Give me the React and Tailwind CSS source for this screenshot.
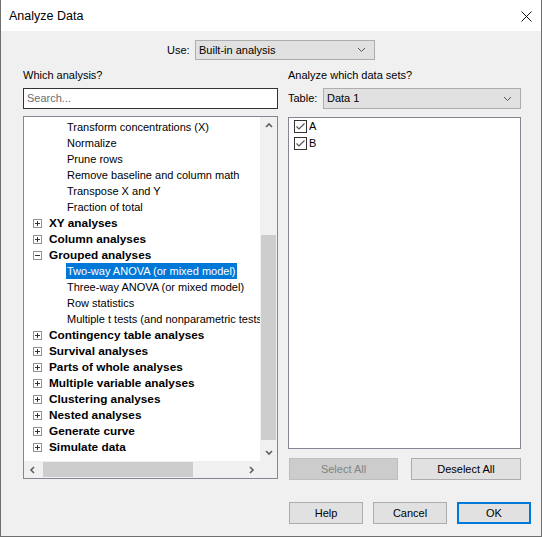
import React from "react";

const FONT = { fontFamily: '"Liberation Sans", Arial, sans-serif' };

// rows of the analysis tree: kind "child" | "group" (collapsed) | "open" (expanded)
const treeRows = [
  { kind: "child", label: "Transform concentrations (X)" },
  { kind: "child", label: "Normalize" },
  { kind: "child", label: "Prune rows" },
  { kind: "child", label: "Remove baseline and column math" },
  { kind: "child", label: "Transpose X and Y" },
  { kind: "child", label: "Fraction of total" },
  { kind: "group", label: "XY analyses" },
  { kind: "group", label: "Column analyses" },
  { kind: "open", label: "Grouped analyses" },
  { kind: "child", label: "Two-way ANOVA (or mixed model)", selected: true },
  { kind: "child", label: "Three-way ANOVA (or mixed model)" },
  { kind: "child", label: "Row statistics" },
  { kind: "child", label: "Multiple t tests (and nonparametric tests)" },
  { kind: "group", label: "Contingency table analyses" },
  { kind: "group", label: "Survival analyses" },
  { kind: "group", label: "Parts of whole analyses" },
  { kind: "group", label: "Multiple variable analyses" },
  { kind: "group", label: "Clustering analyses" },
  { kind: "group", label: "Nested analyses" },
  { kind: "group", label: "Generate curve" },
  { kind: "group", label: "Simulate data" },
];

const Chevron = ({ dir = "down", className = "" }) => {
  const pts = {
    down: "1,1 4.5,4.5 8,1",
    up: "1,4.5 4.5,1 8,4.5",
  };
  return (
    <svg width="9" height="6" viewBox="0 0 9 6" className={className}>
      <polyline points={pts[dir]} fill="none" stroke="currentColor" strokeWidth="1" />
    </svg>
  );
};

const ScrollArrow = ({ dir }) => {
  const pts = {
    up: "1,5 4,2 7,5",
    down: "1,2 4,5 7,2",
    left: "5,1 2,4 5,7",
    right: "2,1 5,4 2,7",
  };
  return (
    <svg width="8" height="8" viewBox="0 0 8 8" className="text-[#606060]">
      <polyline points={pts[dir]} fill="none" stroke="currentColor" strokeWidth="1.6" />
    </svg>
  );
};

const Expander = ({ open }) => (
  <div className="w-[9px] h-[9px] border border-[#919191] bg-white relative shrink-0">
    <div className="absolute left-[1px] top-[3px] w-[5px] h-[1px] bg-[#333]" />
    {!open && <div className="absolute left-[3px] top-[1px] w-[1px] h-[5px] bg-[#333]" />}
  </div>
);

const Dropdown = ({ value, className = "" }) => (
  <div
    className={`h-[21px] bg-[#e1e1e1] border border-[#adadad] flex items-center justify-between pl-[3px] pr-[8px] ${className}`}
  >
    <span>{value}</span>
    <Chevron dir="down" className="text-[#555]" />
  </div>
);

const CheckItem = ({ label }) => (
  <div className="flex items-center h-[17px]">
    <div className="w-[13px] h-[13px] border border-[#333] bg-white flex items-center justify-center">
      <svg width="11" height="11" viewBox="0 0 11 11">
        <polyline points="1.5,5.5 4,8 9.5,2.5" fill="none" stroke="#555" strokeWidth="1.2" />
      </svg>
    </div>
    <span className="ml-[2px]">{label}</span>
  </div>
);

const Button = ({ children, className = "", disabled = false }) => (
  <div
    className={`h-[22px] flex items-center justify-center border ${
      disabled ? "bg-[#cccccc] border-[#bfbfbf] text-[#838383]" : "bg-[#e1e1e1] border-[#adadad] text-black"
    } ${className}`}
  >
    {children}
  </div>
);

export default function App() {
  return (
    <div
      style={FONT}
      className="w-[542px] h-[537px] bg-[#f0f0f0] border-x border-b border-[#6f6f6f] flex flex-col text-[11px] text-black overflow-hidden"
    >
      {/* Title bar */}
      <div className="h-[31px] bg-white flex items-center justify-between pl-[8px] pr-[9px] pt-[1px] shrink-0">
        <span className="text-[12.5px]">Analyze Data</span>
        <svg width="11" height="11" viewBox="0 0 11 11">
          <path d="M0.5 0.5 L10.5 10.5 M10.5 0.5 L0.5 10.5" stroke="#111" strokeWidth="1" />
        </svg>
      </div>

      {/* Use row */}
      <div className="mt-[9px] h-[20px] flex items-center pl-[166px]">
        <span className="w-[28px]">Use:</span>
        <div className="w-[180px] h-[20px] bg-[#e1e1e1] border border-[#adadad] flex items-center justify-between pl-[3px] pr-[8px]">
          <span>Built-in analysis</span>
          <Chevron dir="down" className="text-[#555]" />
        </div>
      </div>

      {/* Columns */}
      <div className="flex mt-[8px]">
        {/* Left column */}
        <div className="ml-[22px] w-[255px] flex flex-col">
          <div className="h-[14px] leading-[14px]">Which analysis?</div>
          <div className="mt-[6px] h-[21px] bg-white border border-[#333] flex items-center pl-[3px] text-[#6d6d6d]">
            Search...
          </div>
          <div className="mt-[7px] h-[363px] bg-white border border-[#828790] grid grid-cols-[1fr_17px] grid-rows-[1fr_17px]">
            <div className="overflow-hidden pt-[2px]">
              {treeRows.map((r, i) => (
                <div key={i} className="h-[16px] flex items-center whitespace-nowrap">
                  {r.kind === "child" ? (
                    <span
                      className={`ml-[42px] px-[1px] h-[16px] leading-[16px] ${
                        r.selected ? "bg-[#0078d7] text-white" : ""
                      }`}
                    >
                      {r.label}
                    </span>
                  ) : (
                    <>
                      <div className="ml-[9px] mt-[1px]">
                        <Expander open={r.kind === "open"} />
                      </div>
                      <span className="ml-[7px] font-bold text-[11.8px] leading-[16px]">{r.label}</span>
                    </>
                  )}
                </div>
              ))}
            </div>
            {/* vertical scrollbar */}
            <div className="bg-[#f0f0f0] flex flex-col">
              <div className="h-[17px] flex items-center justify-center">
                <ScrollArrow dir="up" />
              </div>
              <div className="flex-1 flex flex-col">
                <div className="h-[101px]" />
                <div className="h-[205px] mx-[1px] bg-[#cdcdcd]" />
              </div>
              <div className="h-[17px] flex items-center justify-center">
                <ScrollArrow dir="down" />
              </div>
            </div>
            {/* horizontal scrollbar */}
            <div className="bg-[#f0f0f0] flex items-stretch">
              <div className="w-[17px] flex items-center justify-center">
                <ScrollArrow dir="left" />
              </div>
              <div className="flex-1 flex py-[1px]">
                <div className="ml-[2px] w-[150px] bg-[#cdcdcd]" />
              </div>
              <div className="w-[17px] flex items-center justify-center">
                <ScrollArrow dir="right" />
              </div>
            </div>
            <div className="bg-[#f0f0f0]" />
          </div>
        </div>

        {/* Right column */}
        <div className="ml-[10px] w-[233px] flex flex-col">
          <div className="h-[14px] leading-[14px]">Analyze which data sets?</div>
          <div className="mt-[6px] h-[21px] flex items-center">
            <span className="w-[35px]">Table:</span>
            <Dropdown value="Data 1" className="w-[198px]" />
          </div>
          <div className="mt-[8px] h-[332px] bg-white border border-[#828790] pl-[5px]">
            <CheckItem label="A" />
            <CheckItem label="B" />
          </div>
          <div className="mt-[9px] flex justify-between">
            <Button disabled className="w-[109px] ml-[1px]">
              Select All
            </Button>
            <Button className="w-[110px]">Deselect All</Button>
          </div>
        </div>
      </div>

      {/* Footer */}
      <div className="mt-[22px] flex justify-end gap-[10px] pr-[10px]">
        <Button className="w-[74px]">Help</Button>
        <Button className="w-[74px]">Cancel</Button>
        <div className="w-[74px] h-[22px] bg-[#e1e1e1] border-2 border-[#0078d7] flex items-center justify-center">
          OK
        </div>
      </div>
    </div>
  );
}
